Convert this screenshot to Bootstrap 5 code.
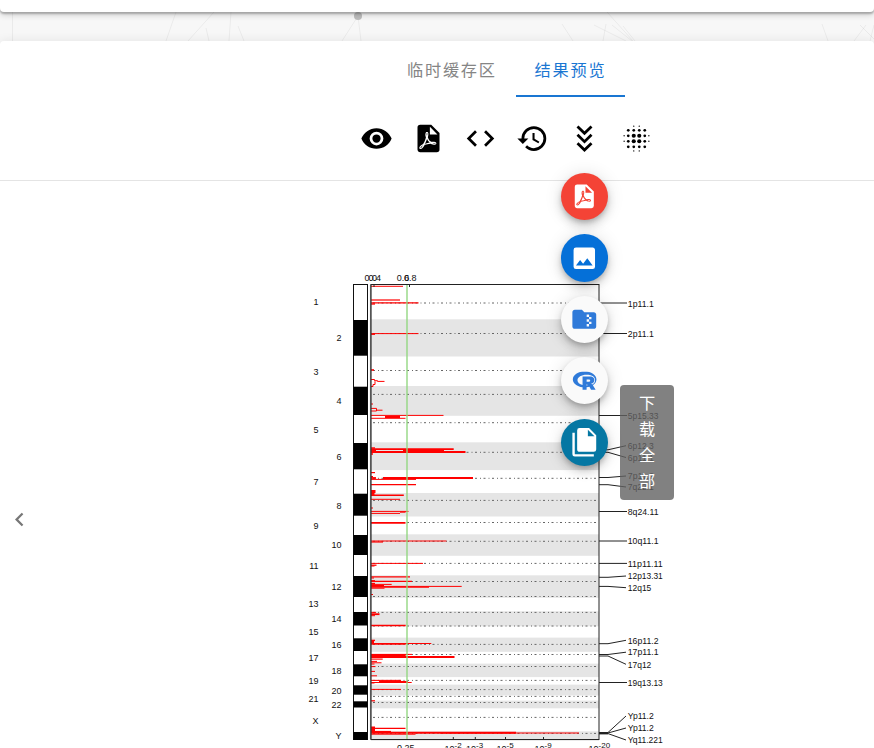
<!DOCTYPE html>
<html lang="zh-CN">
<head>
<meta charset="utf-8">
<meta name="viewport" content="width=device-width, initial-scale=1">
<title>结果预览</title>
<link href="https://cdn.jsdelivr.net/npm/bootstrap@5.3.0/dist/css/bootstrap.min.css" rel="stylesheet">
<style>
html,body{height:748px;overflow:hidden}
body{background:#f7f7f7;font-family:Roboto,"Noto Sans CJK SC",sans-serif}
.stage{height:748px}
.panel-top{height:12px;border-radius:0 0 4px 4px;box-shadow:0 2px 2px rgba(0,0,0,.24),0 3px 6px rgba(0,0,0,.16)}
.web{height:29px}
.panel-main{height:815px;border-radius:4px 4px 0 0;box-shadow:0 -1px 10px rgba(0,0,0,.07)}
.tabs-row{height:56px;padding-left:139px}
.tab-item{height:56px;padding:2px 18.7px 0 19px;font-size:16.2px;letter-spacing:1.8px;line-height:56px;color:#858585;border:0;background:none;white-space:nowrap}
.tab-item.current{color:#1976d2;border-bottom:2px solid #1976d2;padding-right:18.6px}
.tools{height:84px;border-bottom:1px solid #e4e4e4;gap:19px;padding-left:139px}
.tools svg{width:33px;height:33px;display:block}
.chart-row{height:677px}
.arrow{width:39px;color:#777}
.arrow svg{width:27px;height:27px;display:block}
.plot-box{padding-left:101px}
.dial{left:560.6px;top:173px;gap:14.1px;z-index:3}
.fab{width:47.3px;height:47.3px;box-shadow:0 3px 5px -1px rgba(0,0,0,.2),0 6px 10px rgba(0,0,0,.14),0 1px 18px rgba(0,0,0,.12)}
.fab svg{width:28.6px;height:28.6px;display:block}
.fab .r-logo{width:27.4px;height:27.4px;margin-left:1px}
.f-red{background:#f44336;color:#fff}
.f-blue{background:#0570d8;color:#fff}
.f-light{background:#fafafa;color:#2f7ad9}
.f-teal{background:#0577a3;color:#fff}
.tip{left:619.7px;top:384.5px;width:54.5px;height:115.6px;padding:2px 0 0 1px;background:rgba(97,97,97,.8);border-radius:4px;color:#fff;font-size:16.2px;line-height:25.9px;z-index:2}
.tip span{width:17px;word-break:break-all}
.plot text{font-family:"Liberation Sans",Arial,sans-serif;font-size:9px;fill:#111}
</style>
<script src="https://cdn.jsdelivr.net/npm/bootstrap@5.3.0/dist/js/bootstrap.bundle.min.js"></script>
</head>
<body>
<svg class="d-none" aria-hidden="true">
<symbol id="i-pdf" viewBox="1 0 24 24"><path fill="currentColor" d="M14,9H19.5L14,3.5V9M7,2H15L21,8V20A2,2 0 0,1 19,22H7C5.89,22 5,21.1 5,20V4A2,2 0 0,1 7,2M11.93,12.44C12.34,13.34 12.86,14.08 13.46,14.59L13.87,14.91C13,15.07 11.8,15.35 10.53,15.84V15.84L10.42,15.88L10.92,14.84C11.37,13.97 11.7,13.18 11.93,12.44M18.41,16.25C18.59,16.07 18.68,15.84 18.69,15.59C18.72,15.39 18.67,15.2 18.57,15.04C18.28,14.57 17.53,14.35 16.29,14.35L15,14.42L14.13,13.84C13.5,13.32 12.93,12.41 12.53,11.28L12.57,11.14C12.9,9.81 13.21,8.2 12.55,7.54C12.39,7.38 12.17,7.3 11.94,7.3H11.7C11.33,7.3 11,7.69 10.91,8.07C10.54,9.4 10.76,10.13 11.13,11.34V11.35C10.88,12.23 10.56,13.25 10.05,14.28L9.09,16.08L8.2,16.57C7,17.32 6.43,18.16 6.32,18.69C6.28,18.88 6.3,19.05 6.37,19.23L6.4,19.28L6.88,19.59L7.32,19.7C8.13,19.7 9.05,18.75 10.29,16.63L10.47,16.56C11.5,16.23 12.78,16 14.5,15.81C15.53,16.32 16.74,16.55 17.5,16.55C17.94,16.55 18.24,16.44 18.41,16.25M18,15.54L18.09,15.65C18.08,15.75 18.05,15.76 18,15.78H17.96L17.77,15.8C17.31,15.8 16.6,15.61 15.87,15.29C15.96,15.19 16,15.19 16.1,15.19C17.5,15.19 17.9,15.44 18,15.54M8.83,17C8.18,18.19 7.59,18.85 7.14,19C7.19,18.62 7.64,17.96 8.35,17.31L8.83,17M11.85,10.09C11.62,9.19 11.61,8.46 11.78,8.04L11.85,7.92L12,7.97C12.17,8.21 12.19,8.53 12.09,9.07L12.06,9.23L11.9,10.05L11.85,10.09Z"/></symbol>
</svg>
<div class="stage w-100 d-flex flex-column position-relative overflow-hidden">
  <div class="panel-top bg-white flex-shrink-0 position-relative"></div>
  <svg class="web w-100 flex-shrink-0" viewBox="0 12 874 29" fill="none" stroke="#000" stroke-opacity=".05">
    <path d="M12.500 12V41M176 12 166 41M214 12 188 41M231 12 229 41M206 28 209 41M238 26 244 41M358 16 342 41M358 16 361 41M562 24 573 41M594 25 626 41M606 24 603 41M612 25 632 41M623 26 635 41M822 24 828 41M866 25 854 41M860 25 874 39M874 25 870 41M607 12 633 41"/>
    <circle cx="358" cy="16" r="4" fill="#bdbdbd" stroke="none"/>
  </svg>
  <main class="panel-main bg-white flex-shrink-0 position-relative">
    <div class="tabs-row d-flex justify-content-center">
      <button class="tab-item">临时缓存区</button>
      <button class="tab-item current">结果预览</button>
    </div>
    <div class="tools d-flex justify-content-center align-items-center">
      <svg viewBox="0 0 24 24"><path d="M12,9A3,3 0 0,0 9,12A3,3 0 0,0 12,15A3,3 0 0,0 15,12A3,3 0 0,0 12,9M12,17A5,5 0 0,1 7,12A5,5 0 0,1 12,7A5,5 0 0,1 17,12A5,5 0 0,1 12,17M12,4.500C7,4.500 2.730,7.610 1,12C2.730,16.390 7,19.500 12,19.500C17,19.500 21.270,16.390 23,12C21.270,7.610 17,4.500 12,4.500Z"/></svg>
      <svg class="text-black"><use href="#i-pdf"/></svg>
      <svg viewBox="0 0 24 24"><path d="M14.6,16.6L19.2,12L14.6,7.4L16,6L22,12L16,18L14.6,16.6M9.4,16.6L4.8,12L9.4,7.4L8,6L2,12L8,18L9.4,16.6Z"/></svg>
      <svg viewBox="0 0 24 24"><path d="M13.5,8H12V13L16.28,15.54L17,14.33L13.5,12.25V8M13,3A9,9 0 0,0 4,12H1L4.96,16.03L9,12H6A7,7 0 0,1 13,5A7,7 0 0,1 20,12A7,7 0 0,1 13,19C11.07,19 9.32,18.21 8.06,16.94L6.64,18.36C8.27,20 10.5,21 13,21A9,9 0 0,0 22,12A9,9 0 0,0 13,3"/></svg>
      <svg viewBox="0 0 24 24" fill="none" stroke="#000" stroke-width="2"><path d="M6.900 3.200 12 8.200 17.100 3.200M6.900 9.300 12 14.300 17.100 9.300M6.900 15.400 12 20.400 17.100 15.400"/></svg>
      <svg id="blur" viewBox="0 0 24 24"></svg>
    </div>
    <div class="chart-row d-flex align-items-center">
      <div class="arrow d-flex justify-content-center flex-shrink-0"><svg viewBox="0 0 24 24"><path fill="currentColor" d="M15.410,16.580L10.830,12L15.410,7.410L14,6L8,12L14,18L15.410,16.580Z"/></svg></div>
      <div class="plot-box flex-fill d-flex justify-content-center align-self-start">
        <svg id="plot" class="plot d-block flex-shrink-0" width="434" height="567" viewBox="290 181 434 567"></svg>
      </div>
    </div>
  </main>
  <div class="dial position-absolute d-flex flex-column">
    <div class="fab f-red rounded-circle d-flex align-items-center justify-content-center"><svg><use href="#i-pdf"/></svg></div>
    <div class="fab f-blue rounded-circle d-flex align-items-center justify-content-center"><svg viewBox="0 0 24 24" fill="currentColor"><path d="M8.5,13.5L11,16.5L14.5,12L19,18H5M21,19V5C21,3.89 20.1,3 19,3H5A2,2 0 0,0 3,5V19A2,2 0 0,0 5,21H19A2,2 0 0,0 21,19Z"/></svg></div>
    <div class="fab f-light rounded-circle d-flex align-items-center justify-content-center"><svg viewBox="0 0 24 24" fill="currentColor"><path d="M20 6H12L10 4H4C2.900 4 2 4.900 2 6V18C2 19.100 2.900 20 4 20H20C21.100 20 22 19.100 22 18V8C22 6.900 21.100 6 20 6M18 12H16V14H18V16H16V18H14V16H16V14H14V12H16V10H14V8H16V10H18V12Z"/></svg></div>
    <div class="fab f-light rounded-circle d-flex align-items-center justify-content-center"><svg class="r-logo" viewBox="0 0 24 24" fill="currentColor" fill-rule="evenodd"><path d="M11.956 4.050c-5.694 0-10.354 3.106-10.354 6.947 0 3.396 3.686 6.212 8.531 6.813v2.205h3.530V17.820c.88-.093 1.699-.259 2.475-.497l1.430 2.692h3.996l-2.402-4.048c1.936-1.263 3.147-3.034 3.147-4.970 0-3.841-4.659-6.947-10.354-6.947m1.584 2.712c4.349 0 7.558 1.450 7.558 4.753 0 1.770-.952 3.013-2.505 3.779a1.081 1.081 0 0 1-.228-.156c-.373-.165-.994-.352-.994-.352s3.085-.227 3.085-3.302-3.230-3.127-3.230-3.127h-7.092v7.413c-2.640-.766-4.462-2.392-4.462-4.255 0-2.630 3.520-4.753 7.868-4.753m.156 4.120h2.143s.983-.05.983.974c0 1.004-.983 1.004-.983 1.004h-2.143v-1.977m-.566 4.643h1.025c.124 0 .166.020.29.135.123.093.3.340.3.340-.506.062-1.044.093-1.615.093z"/></svg></div>
    <div class="fab f-teal rounded-circle d-flex align-items-center justify-content-center"><svg viewBox="0 0 24 24" fill="currentColor"><path d="M15,7H20.5L15,1.5V7M8,0H16L22,6V18A2,2 0 0,1 20,20H8C6.89,20 6,19.1 6,18V2A2,2 0 0,1 8,0M4,4V22H20V24H4A2,2 0 0,1 2,22V4H4Z"/></svg></div>
  </div>
  <div class="tip position-absolute d-flex justify-content-center align-items-center"><span>下载全部</span></div>
</div>
<script>
// Blur icon: dots grow toward the centre
const big=[10,14], ring=[6,10,14,18];
let dots='';
const dot=(x,y,r)=>dots+=`<circle cx="${x}" cy="${y}" r="${r}"/>`;
ring.forEach(x=>ring.forEach(y=>dot(x,y,big.includes(x)&&big.includes(y)?1.5:1)));
big.forEach(v=>[3,21].forEach(e=>{dot(v,e,.5);dot(e,v,.5);}));
document.getElementById('blur').innerHTML=dots;

// Chromosome plot
let out='';
const line=(x1,y1,x2,y2,c,w,extra='')=>out+=`<path d="M${x1} ${y1}L${x2} ${y2}" stroke="${c}" stroke-width="${w}" fill="none" ${extra}/>`;
const rect=(x,y,w,h,f)=>out+=`<rect x="${x}" y="${y}" width="${w}" height="${h}" fill="${f}"/>`;
const label=(x,y,t,extra='')=>out+=`<text x="${x}" y="${y}" ${extra}>${t}</text>`;
const bands=[[320,355.7],[386.7,415],[443,469.3],[493.7,515.7],[535,555],[576,597],[612,625.5],[638.3,651],[664.3,676.3],[685.3,694.7],[701.3,707.5],[732,740]];
bands.forEach(([a,b])=>rect(371,a-.7,228,b-a+1.5,'#e5e5e5'));
[303,333.5,370.5,394.4,422.7,452.3,478.3,500.4,522.5,541.3,563.4,581.5,596.5,612.4,626,644.4,654.5,666.5,680.4,689.6,696.4,702.5,717.4,733.4]
 .forEach(y=>line(373,y,598,y,'#666',1,'stroke-dasharray="2 3 1 2.500"'));
// Peaks: y, right end, thickness, left start
[[286.3,403,1],[300,400,1.2],[302.8,418.5,1.3],[304,375,1.3],[333.6,418.5,1],[334.4,375,1],[370,374,1.6],[404,373,1],[415.4,443.5,1],[417,400,2,385],[418.3,405.500,1],
[448,375,1.4],[449.2,453.7,1.8],[450.7,444,2,403],[452,465.5,1.8],[450.5,376,1],[454,373,1.4],[472.600,375,1.2],[476.6,373,1.4],[478,473,1.9,383],[478,376,1.8],[479.4,416,1],[484.7,416,1.3],
[491.500,375.5,3],[493.7,374.5,2.500],[495.2,403.8,1.5],[499.3,400,1],[508,373,1.2],[511.4,408.5,1],[512.2,405.5,1,400],[513.4,400,1],[522.8,405.5,1.8],[541,446.5,1.1],[542,383,1.2],[563.4,423,1],[565.2,376.5,1.3],[566,374.5,1],
[576.9,410,1.1],[578,374,1],[581.4,412,1.2],[580.600,375,1],[584.4,391.7,1],[583.600,375,1.500],[585.7,384,1.4],[586.4,461.7,1],[587.2,429,1.2],[588.200,384.500,1],[594.5,373,1],[612.4,376,1],[614.2,379.5,1.8],[615.7,375,1],[625.5,405.7,1.6],
[640.4,375,1.4],[642,374,3],[643.5,431.3,1],[644.2,405.7,1.3],[654.4,412,1],[655.8,405.7,3.6],[657,454.5,1.8],[659.1,382.7,1.1],[661.4,377,1],[662.8,381.5,1],[664,374.5,1],[666.600,375.5,1],[671.4,375,1],[675.8,377,1],
[680.4,401,1.1],[681.6,408,1.3,379],[682.5,411.700,1],[683,374.5,1],[689.4,401,1],[700.800,375,1.2],[728.4,405.5,1.1],[729,375,5],[731.5,391,1.2],[733,579,1,440],[732.7,516,1.9],[734.2,415.5,1]]
 .forEach(([y,x,h,s=371])=>line(s,y,x,y,'#f00',h));
out+='<path d="M371 379.500H374.500V380.700H377.500V381.400H384.500M375 381.400V384.500H373V386.500H371M371 408.400H376.500V411H371M376.500 410.200H382.500" stroke="#f00" fill="none"/>';
line(407,285,407,739,'#8fd67e',1.8,'stroke-opacity=".75"');
// Frame and ideogram
out+='<rect x="371" y="284.500" width="228" height="455" fill="none" stroke="#222"/>';
line(370.6,284.5,370.6,739.5,'#555',1.3);
out+='<rect x="353.500" y="284.500" width="14" height="455" fill="#fff" stroke="#111"/>';
bands.forEach(([a,b])=>rect(353.5,a,14,b-a,'#000'));
[374,409.5].forEach(x=>line(x,285,x,287,'#222',1));
[453.3,475.3,505.5,543.5].forEach(x=>line(x,737,x,739.5,'#222',1));
line(599,733.3,608,733.3,'#111',2);
// Chromosome names alternate between two columns
[302,338,371.5,401,429.7,456.3,481.5,505.5,525.5,545,565.5,586.5,604,618.7,631.7,644.5,657.7,670.7,680.8,690.8,698.4,704.8,720.3,735.7]
 .forEach((y,i)=>label(i%2?341.6:318.6,y+3.2,i==22?'X':i==23?'Y':i+1,'text-anchor="end"'));
// Region labels: text, label y, peak y
[['1p11.1',303.5,303],['2p11.1',333.7,333.5],['5p15.33',416,415.5],['6p12.3',445.7,449.8],['6p11.1',457.5,452.3],['7p11.2',476,477.5],['7q22.1',487,484.7],['8q24.11',512,511.5],['10q11.1',541,541],['11p11.11',564,563.4],['12p13.31',576,577.3],['12q15',587.7,586.4],['16p11.2',640.3,643.7],['17p11.1',652.2,654.5],['17q12',664.3,656],['19q13.13',682.7,682.5],['Yp11.2',716,732.5],['Yp11.2',728,733],['Yq11.221',740,733.6]]
 .forEach(([t,y,p])=>{
  const flat=Math.abs(y-p)<1;
  out+=flat?`<path d="M599 ${p}H627" stroke="#222" fill="none"/>`:`<path d="M599 ${p}H608L626 ${y}" stroke="#222" fill="none"/>`;
  label(627.8,y+3.2,t,`textLength="${{6:26,7:30.7,8:35,5:23.5}[t.length]}" lengthAdjust="spacingAndGlyphs"`);
 });
[[364.4,'0.0'],[368.5,'0.4'],[396.8,'0.6'],[404,'0.8']].forEach(([x,t])=>label(x,281.4,t));
label(397,751,'0.25');
[[444.5,'-2'],[466,'-3'],[496.5,'-5'],[534.5,'-9'],[588.5,'-20']].forEach(([x,e])=>out+=`<text x="${x}" y="752">10<tspan dy="-3.800" font-size="8">${e}</tspan></text>`);
document.getElementById('plot').innerHTML=out;
</script>
</body>
</html>
